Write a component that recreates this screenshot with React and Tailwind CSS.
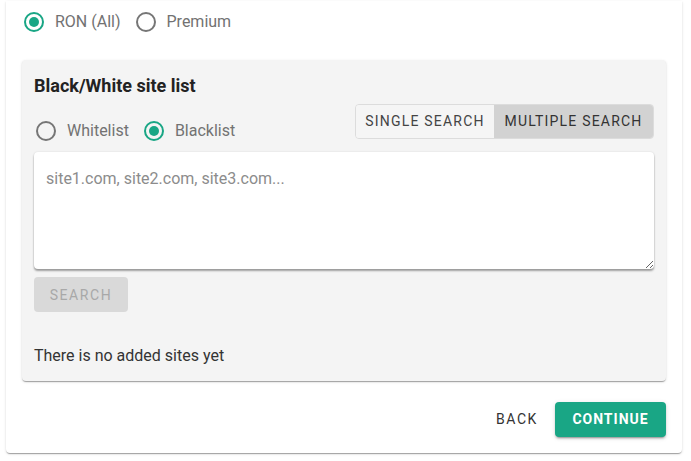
import React, { useState } from 'react';

const TEAL = '#19a685';

function RadioIcon({ checked }) {
  return (
    <svg width="24" height="24" viewBox="0 0 24 24" className="shrink-0">
      <circle cx="12" cy="12" r="9" fill="none" stroke={checked ? TEAL : '#767676'} strokeWidth="2" />
      {checked && <circle cx="12" cy="12" r="5" fill={TEAL} />}
    </svg>
  );
}

function RadioOption({ label, checked, onClick }) {
  return (
    <button onClick={onClick} className="flex items-center h-[42px] gap-[9px] text-[16px] text-[#727272]">
      <RadioIcon checked={checked} />
      <span>{label}</span>
    </button>
  );
}

export default function App() {
  const [target, setTarget] = useState('ron');
  const [listType, setListType] = useState('black');
  const [mode, setMode] = useState('multiple');
  const [text, setText] = useState('');

  return (
    <div className="bg-white min-h-[461px] pl-[6px] pt-[1px]" style={{ fontFamily: 'Roboto, "Liberation Sans", sans-serif' }}>
      <div className="w-[676px] bg-white rounded-b-[4px] px-4 pb-4 shadow-[0_2px_1px_-1px_rgba(0,0,0,0.2),0_1px_1px_0_rgba(0,0,0,0.14),0_1px_3px_0_rgba(0,0,0,0.12)]">
        <div className="flex items-center gap-[13px]">
          <RadioOption label="RON (All)" checked={target === 'ron'} onClick={() => setTarget('ron')} />
          <RadioOption label="Premium" checked={target === 'premium'} onClick={() => setTarget('premium')} />
        </div>

        <div className="mt-[17px] bg-[#f4f4f4] rounded-[4px] px-3 pt-3 pb-[13px] shadow-[0_2px_1px_-1px_rgba(0,0,0,0.2),0_1px_1px_0_rgba(0,0,0,0.14),0_1px_3px_0_rgba(0,0,0,0.12)]">
          <h3 className="text-[18px] font-bold leading-[27px] text-[#222]">Black/White site list</h3>

          <div className="flex items-start justify-between">
            <div className="flex items-center gap-[13px] mt-[11px]">
              <RadioOption label="Whitelist" checked={listType === 'white'} onClick={() => setListType('white')} />
              <RadioOption label="Blacklist" checked={listType === 'black'} onClick={() => setListType('black')} />
            </div>
            <div className="mt-[5px] flex h-[35px] border border-[#dcdcdc] rounded-[4px] overflow-hidden text-[14px] font-normal tracking-[1.2px] text-[#444]">
              <button
                onClick={() => setMode('single')}
                className={`w-[138px] ${mode === 'single' ? 'bg-[#d2d2d2] text-[#333]' : 'bg-[#f5f5f5]'}`}
              >
                SINGLE SEARCH
              </button>
              <button
                onClick={() => setMode('multiple')}
                className={`w-[159px] ${mode === 'multiple' ? 'bg-[#d2d2d2] text-[#333]' : 'bg-[#f5f5f5]'}`}
              >
                MULTIPLE SEARCH
              </button>
            </div>
          </div>

          <textarea
            value={text}
            onChange={(e) => setText(e.target.value)}
            placeholder="site1.com, site2.com, site3.com..."
            className="block w-full h-[117px] bg-white rounded-[4px] px-3 pt-4 text-[16px] leading-[1.4] text-[#333] placeholder:text-[#8c8c8c] outline-none shadow-[0_2px_2px_0_rgba(0,0,0,0.35),0_0_2px_0_rgba(0,0,0,0.12)]"
          />

          <button
            disabled={!text}
            className="mt-2 w-[94px] h-[35px] pt-[1px] rounded-[4px] bg-[#d9d9d9] text-[14px] font-normal tracking-[1.6px] text-[#a8a8a8]"
          >
            SEARCH
          </button>

          <p className="mt-8 text-[16px] leading-6 text-[#333]">There is no added sites yet</p>
        </div>

        <div className="mt-[21px] flex items-center justify-end gap-[9px]">
          <button className="h-[35px] px-2 text-[14px] font-normal tracking-[1.6px] text-[#333]">BACK</button>
          <button className="h-[35px] w-[111px] rounded-[4px] bg-[#19a685] text-white text-[14px] font-bold tracking-[1px] shadow-[0_3px_1px_-2px_rgba(0,0,0,0.2),0_2px_2px_0_rgba(0,0,0,0.14),0_1px_5px_0_rgba(0,0,0,0.12)]">
            CONTINUE
          </button>
        </div>
      </div>
    </div>
  );
}
